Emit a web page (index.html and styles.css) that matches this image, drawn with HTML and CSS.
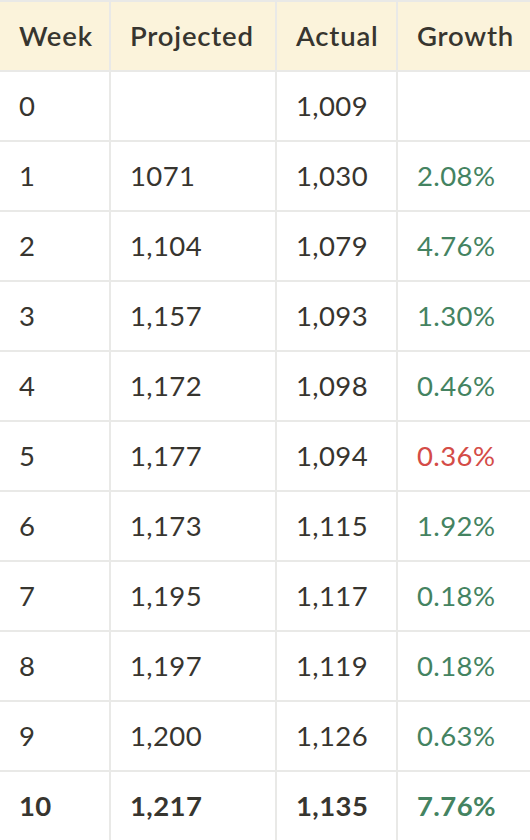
FILE: index.html
```html
<!DOCTYPE html>
<html>
<head>
<meta charset="utf-8">
<link rel="stylesheet" href="styles.css">
</head>
<body>
<table class="growth-table">
  <colgroup>
    <col class="c-week"><col class="c-proj"><col class="c-act"><col class="c-growth">
  </colgroup>
  <thead>
    <tr><th>Week</th><th>Projected</th><th>Actual</th><th>Growth</th></tr>
  </thead>
  <tbody>
    <tr><td>0</td><td></td><td>1,009</td><td></td></tr>
    <tr><td>1</td><td>1071</td><td>1,030</td><td class="up">2.08%</td></tr>
    <tr><td>2</td><td>1,104</td><td>1,079</td><td class="up">4.76%</td></tr>
    <tr><td>3</td><td>1,157</td><td>1,093</td><td class="up">1.30%</td></tr>
    <tr><td>4</td><td>1,172</td><td>1,098</td><td class="up">0.46%</td></tr>
    <tr><td>5</td><td>1,177</td><td>1,094</td><td class="down">0.36%</td></tr>
    <tr><td>6</td><td>1,173</td><td>1,115</td><td class="up">1.92%</td></tr>
    <tr><td>7</td><td>1,195</td><td>1,117</td><td class="up">0.18%</td></tr>
    <tr><td>8</td><td>1,197</td><td>1,119</td><td class="up">0.18%</td></tr>
    <tr><td>9</td><td>1,200</td><td>1,126</td><td class="up">0.63%</td></tr>
    <tr class="total"><td>10</td><td>1,217</td><td>1,135</td><td class="up">7.76%</td></tr>
  </tbody>
</table>
</body>
</html>
```
FILE: styles.css
```css
html, body {
  margin: 0;
  padding: 0;
  background: #ffffff;
}
.growth-table {
  border-collapse: separate;
  border-spacing: 0;
  table-layout: fixed;
  width: 540px;
  border-top: 2px solid #e9e9e7;
  font-family: Lato, "Noto Sans", sans-serif;
  font-size: 27.5px;
  letter-spacing: 0.4px;
  color: #37352f;
}
.c-week { width: 111px; }
.c-proj { width: 166px; }
.c-act { width: 121px; }
.c-growth { width: 142px; }
.growth-table th,
.growth-table td {
  height: 70px;
  padding: 0 0 2px 19px;
  border-right: 2px solid #e9e9e7;
  border-bottom: 2px solid #e9e9e7;
  text-align: left;
  vertical-align: middle;
  box-sizing: border-box;
  white-space: nowrap;
}
.growth-table th {
  background: #fbf3db;
  font-weight: 600;
  letter-spacing: 0.8px;
}
.growth-table td.up { color: #448361; }
.growth-table td.down { color: #d44c47; }
.growth-table tr.total td { font-weight: 700; }
```
